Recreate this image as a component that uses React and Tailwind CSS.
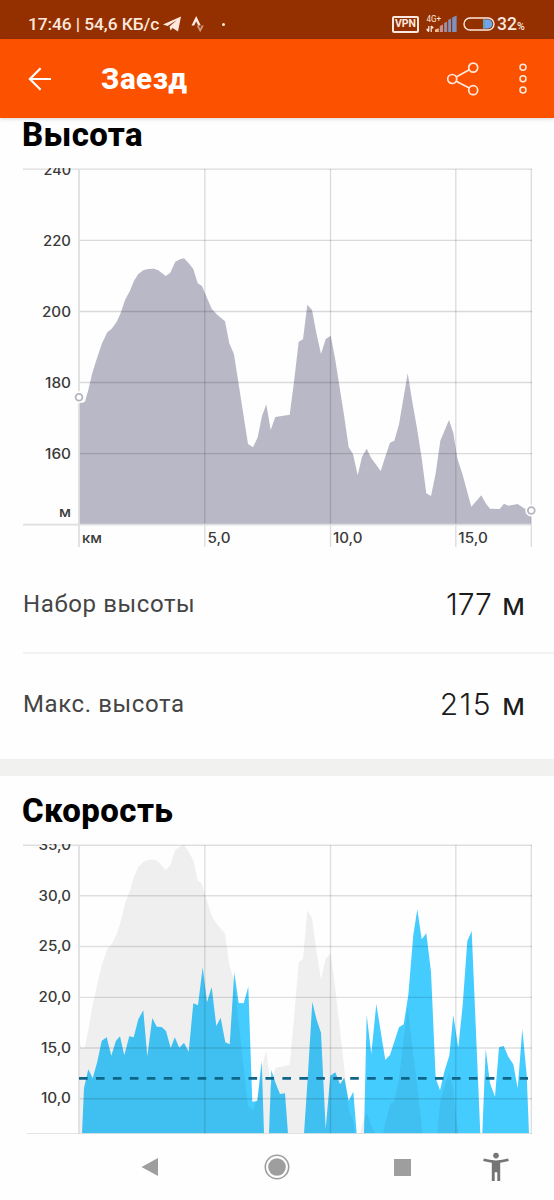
import React from "react";

const ELEVATION =
  "M79 524V398L81.7 403L85 401.7L88.3 390L92.3 373L96.7 359L101.7 344L107.3 332.3L111.7 328.7L116.7 321.7L120.7 313L125 300L130 290.7L134 280.7L138.3 274L143.3 270.3L148 269L154 268.7L158.3 270.3L165.7 276L170.3 272.7L175.3 261.7L180 259.3L184 258.3L188.3 262.7L193.3 269L197.7 283.3L202 286L205 293.3L211.7 308.8L216.7 314.3L225 321.3L229.3 343.3L234 354.3L243.3 414L248 444L253 447.3L257.7 437.3L262 416L266.3 404.3L270.7 430L275.3 417L289.7 414.7L294 381.7L298.7 341.7L303 339.3L307.3 304.7L312 310L316.3 332.7L321 354L325.7 339L330.7 335.7L335 358.3L344 415L348.7 447.3L353 454L357.7 475.3L362 456.7L366.7 448.7L371 457.7L380.7 471L385.3 456.7L390 442.7L394.3 440.7L399 424.3L407.7 373.3L412.3 401.7L417 428.3L421.7 458.3L426.3 493.3L431 496L435.7 473.3L440.3 440.7L449 420L453.3 432.7L457.3 458.3L462.7 475L471.3 506.7L481.3 495.3L485.7 503.3L490 508.7L499.7 509L504 503.7L508.3 505.7L517.7 504L524 508.3L531 510V524Z";

const SPEED =
  "M82 1133.5L84 1088L88.3 1069.3L92.7 1078.3L97.3 1061.7L101.7 1040.7L106.7 1037.3L111.3 1055.7L116 1040.7L120 1036.3L124.3 1055.3L129.3 1036.3L133.7 1037.3L138.3 1019.3L143.3 1010.3L147.3 1056.3L152.3 1018L156.7 1026.7L161.7 1027L166 1031L170.7 1048L174.8 1037.3L179.3 1047.7L184 1042.7L188.7 1051.7L193.3 1003.3L198 1005.3L202.7 967.3L207 1002.3L211.7 987L216.3 1026L220.7 1017.7L225.3 1042.3L229.7 1044.3L234.3 972.3L238.7 1003L243.7 1003.3L248.3 986.7L252.3 1101.7L257.3 1101L261.7 1060.7L264 1133.5Z" +
  "M269 1133.5L271.3 1070L275.3 1082.3L280 1094L285 1093.3L288 1133.5Z" +
  "M304 1133.5L307.7 1078.3L312.3 1002L316.7 1020L321 1032.7L325.7 1129L330.3 1075.7L335.3 1072.3L340 1084.3L344.3 1077.7L348.7 1100.7L353.3 1091.7L356.7 1133.5Z" +
  "M364 1133.5L366.7 1015L371.3 1054L376.3 1004L385.3 1060L390 1055L399 1027.3L403.7 1024.3L408.3 995L413.3 935L417.3 909.3L421.7 939.3L426.3 933.3L431 971.7L435.7 1078.3L440 1090.3L444.3 1071.7L449.3 1055.7L453.3 1015L458.3 1047.7L462.7 1005L467.3 941L471.7 931L480.3 1133.5Z" +
  "M482.3 1133.5L485.7 1049L490 1083.3L495 1096.7L499 1047.3L503.7 1046L508.3 1056.7L513.3 1064.3L517.7 1088.3L522.3 1029L526.7 1075L529 1133.5Z";

const COLUMNS = [204.8, 330.5, 455.8, 531.3];

function AxisLabel({ y, width, children }) {
  return (
    <text
      x={71 - width}
      y={y}
      textLength={width}
      lengthAdjust="spacingAndGlyphs"
      className="fill-[#3a3a38] font-['Inter',sans-serif] text-[14px] font-medium"
    >
      {children}
    </text>
  );
}

function ElevationChart() {
  return (
    <svg viewBox="0 160 554 392" className="block h-[392px] w-[554px] shrink-0">
      <defs>
        <clipPath id="elevation-axis">
          <rect x="0" y="168" width="79" height="380" />
        </clipPath>
      </defs>
      <path d={ELEVATION} fill="#b9b8c6" />
      <g stroke="#000" strokeOpacity="0.14" strokeWidth="1.3">
        <path d="M23 169.2H532M79 240.3H532M79 311.5H532M79 382.5H532M79 453.7H532" />
        {COLUMNS.map((x) => (
          <path key={x} d={`M${x} 169V547`} />
        ))}
      </g>
      <path d="M23 524.6H532M79 169V547" stroke="#dedede" strokeWidth="1.7" />
      <g clipPath="url(#elevation-axis)">
        <AxisLabel y={174.5} width={27.5}>240</AxisLabel>
        <AxisLabel y={245.5} width={28}>220</AxisLabel>
        <AxisLabel y={316.7} width={29}>200</AxisLabel>
        <AxisLabel y={387.5} width={26}>180</AxisLabel>
        <AxisLabel y={458.8} width={26}>160</AxisLabel>
        <AxisLabel y={516.5} width={12}>м</AxisLabel>
      </g>
      <g className="fill-[#3a3a38] font-['Inter',sans-serif] text-[14px] font-medium">
        <text x="82" y="543.3" textLength="20" lengthAdjust="spacingAndGlyphs">км</text>
        <text x="207.5" y="543.3" textLength="23" lengthAdjust="spacingAndGlyphs">5,0</text>
        <text x="333" y="543.3" textLength="29.5" lengthAdjust="spacingAndGlyphs">10,0</text>
        <text x="458.3" y="543.3" textLength="29.5" lengthAdjust="spacingAndGlyphs">15,0</text>
      </g>
      <circle cx="79" cy="397.2" r="6" fill="#fff" />
      <circle cx="79" cy="397.2" r="3.4" fill="#fff" stroke="#b5b4c1" strokeWidth="1.8" />
      <circle cx="531.3" cy="510.5" r="6" fill="#fff" />
      <circle cx="531.3" cy="510.5" r="3.4" fill="#fff" stroke="#b5b4c1" strokeWidth="1.8" />
    </svg>
  );
}

function SpeedChart() {
  return (
    <svg viewBox="0 838 554 296" className="block h-[296px] w-[554px] shrink-0">
      <defs>
        <clipPath id="speed-axis">
          <rect x="0" y="844" width="79" height="290" />
        </clipPath>
        <clipPath id="speed-plot">
          <rect x="78" y="845" width="455" height="288.3" />
        </clipPath>
      </defs>
      <g clipPath="url(#speed-plot)">
        <path d={SPEED} fill="#44ccff" />
        <g transform="translate(0 482.1) scale(1 1.405)">
          <path d={ELEVATION} fill="#000" fillOpacity="0.06" />
        </g>
      </g>
      <g stroke="#000" strokeOpacity="0.12" strokeWidth="1.4">
        <path d="M23 845.3H532M79 895.8H532M79 946.5H532M79 997.4H532M79 1048H532M79 1098.8H532" />
        {COLUMNS.map((x) => (
          <path key={x} d={`M${x} 845V1133.4`} />
        ))}
      </g>
      <path d="M79 845V1133.4" stroke="#dedede" strokeWidth="1.7" />
      <path d="M27 1133.5H532" stroke="#000" strokeOpacity="0.1" strokeWidth="1" />
      <path d="M79 1078.4H528" stroke="#0e6588" strokeWidth="2.6" strokeDasharray="8.6 8.35" />
      <g clipPath="url(#speed-axis)">
        <AxisLabel y={850.3} width={32.5}>35,0</AxisLabel>
        <AxisLabel y={900.5} width={32.5}>30,0</AxisLabel>
        <AxisLabel y={951.2} width={32.5}>25,0</AxisLabel>
        <AxisLabel y={1002} width={32.5}>20,0</AxisLabel>
        <AxisLabel y={1052.5} width={30}>15,0</AxisLabel>
        <AxisLabel y={1103.2} width={30}>10,0</AxisLabel>
      </g>
    </svg>
  );
}

function StatusBar() {
  return (
    <div className="flex h-[39px] shrink-0 items-center bg-[#943000] pl-[28px] pt-[9px] text-[#fce8de]">
      <span className="w-[135px] whitespace-nowrap text-[17.4px] leading-[30px] font-medium tracking-[-0.1px]">17:46 | 54,6 КБ/с</span>
      <svg viewBox="0 0 18 16" className="h-[16px] w-[18px]">
        <path d="M0 8.5L18 0.5L15 15.5L9.5 12L7.5 14.5L6.5 10.5L14 4L4.5 10Z" fill="#fce8de" />
      </svg>
      <svg viewBox="0 0 14 18" className="ml-[10px] h-[18px] w-[14px]">
        <path d="M0.5 10.5L5.2 1L9.8 10.5H7.2L5.2 6.4L3.2 10.5Z" fill="#fce8de" />
        <path d="M5.6 10.5H7.6L9.2 13.4L10.8 10.5H12.8L9.2 17.2Z" fill="#d39a7e" />
      </svg>
      <span className="ml-[17px] size-[3px] rounded-full bg-[#fce8de]" />
      <div className="ml-[167px] flex h-[17px] w-[27px] items-center justify-center rounded-[2px] border-2 border-[#fce8de] pt-px text-[10.5px] leading-none font-bold">
        VPN
      </div>
      <svg viewBox="0 0 31 20" className="ml-[7px] mb-[1px] h-[20px] w-[31px]">
        <text x="0.5" y="8.3" textLength="14.5" lengthAdjust="spacingAndGlyphs" fontSize="8.3" fill="#fce8de">4G+</text>
        <path d="M2.8 12V17M5.2 12V18M0.5 15.3H2.8M7.2 13.8H5.2M0.6 15.3L2.8 17.8M7.4 14L5.2 12" stroke="#fce8de" strokeWidth="1.2" fill="none" />
        <path d="M9 18V15.5L12.8 14.3V18Z" fill="#f0b98c" />
        <path d="M13.8 18V12L17 10.6V18Z" fill="#c58f98" />
        <path d="M18.1 18V9L21.1 7.5V18Z" fill="#9a8ba9" />
        <path d="M22.2 18V6L25 4.4V18Z" fill="#8493bc" />
        <path d="M26.2 18V3.6L30.6 1.5V18Z" fill="#7f91be" />
      </svg>
      <svg viewBox="0 0 32 14" className="ml-[6px] h-[14px] w-[32px]">
        <rect x="1" y="1" width="30" height="12" rx="6" fill="none" stroke="#fce8de" strokeWidth="1.4" />
        <path d="M20 2.6H25A4.4 4.4 0 0 1 25 11.4H20Z" fill="#6ba6ef" />
        <path d="M20 2.6H22V11.4H20Z" fill="#5ba9ae" />
      </svg>
      <span className="ml-[2px] mt-[2px] text-[17.5px] leading-none font-medium">32</span>
      <span className="mt-[6px] text-[10.5px] leading-none font-medium">%</span>
    </div>
  );
}

function AppBar() {
  return (
    <div className="z-10 flex h-[79px] shrink-0 items-center bg-[#fc5200] pl-[28px] pr-[26px] text-white shadow-[0_1px_4px_rgba(0,0,0,0.16)]">
      <svg viewBox="0 0 24 24" className="size-[24px]" fill="none" stroke="#fff" strokeWidth="2.2">
        <path d="M12.6 1.3L1.9 12L12.6 22.7M2 12H23" />
      </svg>
      <h1 className="ml-[49px] flex-1 text-[29.5px] leading-[40px] font-extrabold tracking-[0.5px]">Заезд</h1>
      <svg viewBox="0 0 32 34" className="h-[34px] w-[32px]" fill="none" stroke="#ffe9de" strokeWidth="1.7">
        <circle cx="5.2" cy="17" r="4.5" />
        <circle cx="26.2" cy="5.6" r="4.5" />
        <circle cx="26.2" cy="28.2" r="4.5" />
        <path d="M9.2 14.9L22.3 7.7M9.2 19.2L22.3 26.1" />
      </svg>
      <svg viewBox="0 0 10 34" className="ml-[39px] h-[34px] w-[10px]" fill="none" stroke="#ffe9de" strokeWidth="1.5">
        <circle cx="5" cy="5.3" r="3" />
        <circle cx="5" cy="16.7" r="3" />
        <circle cx="5" cy="28" r="3" />
      </svg>
    </div>
  );
}

function StatRow({ label, children }) {
  return (
    <div className="flex h-[100px] items-center justify-between pr-[29px]">
      <span className="text-[24px] tracking-[0.6px] text-[#454545]">{label}</span>
      <span className="flex items-baseline gap-[10px] font-['Inter',sans-serif] text-[30px] leading-none text-[#1c1c1c]">
        {children}
        <span>м</span>
      </span>
    </div>
  );
}

function NavBar() {
  return (
    <div className="flex h-[66px] shrink-0 items-center bg-[#fefefe] pl-[141px]">
      <svg viewBox="0 0 18 20" className="h-[20px] w-[18px]">
        <path d="M0.5 10L17 1V19Z" fill="#9e9e9e" />
      </svg>
      <svg viewBox="0 0 26 26" className="ml-[105px] size-[26px]">
        <circle cx="13" cy="13" r="11.7" fill="none" stroke="#9e9e9e" strokeWidth="1.6" />
        <circle cx="13" cy="13" r="8.8" fill="#9e9e9e" />
      </svg>
      <span className="ml-[104px] size-[17px] bg-[#9e9e9e]" />
      <svg viewBox="0 0 26 30" className="ml-[72px] h-[30px] w-[26px]" fill="#757575">
        <circle cx="13" cy="3.6" r="2.8" />
        <path d="M0.8 6.6Q13 10.2 25.2 6.6L25.8 9.1Q21 10.4 17.2 10.8V29H14.3V20.2H11.7V29H8.8V10.8Q5 10.4 0.2 9.1Z" />
      </svg>
    </div>
  );
}

export default function App() {
  return (
    <div className="flex h-[1200px] w-[554px] flex-col overflow-hidden bg-[#fefefe] font-['Roboto',sans-serif]">
      <StatusBar />
      <AppBar />
      <main className="flex h-[1016px] shrink-0 flex-col">
        <h2 className="h-[42px] shrink-0 pl-[22px] text-[33px] leading-[33px] font-extrabold tracking-[0.4px] text-black">Высота</h2>
        <ElevationChart />
        <div className="flex h-[207px] shrink-0 flex-col pl-[23px]">
          <div className="h-[102px] border-b-2 border-[#f2f2f2] pt-[2px]">
            <StatRow label="Набор высоты">
              <span className="font-light">177</span>
            </StatRow>
          </div>
          <StatRow label="Макс. высота">
            <span className="font-light tracking-[1.4px]">215</span>
          </StatRow>
        </div>
        <div className="h-[17px] shrink-0 bg-[#f1f1f0]" />
        <h2 className="h-[62px] shrink-0 pl-[22px] pt-[18px] text-[33px] leading-[33px] font-extrabold tracking-[0.4px] text-black">Скорость</h2>
        <SpeedChart />
      </main>
      <NavBar />
    </div>
  );
}
